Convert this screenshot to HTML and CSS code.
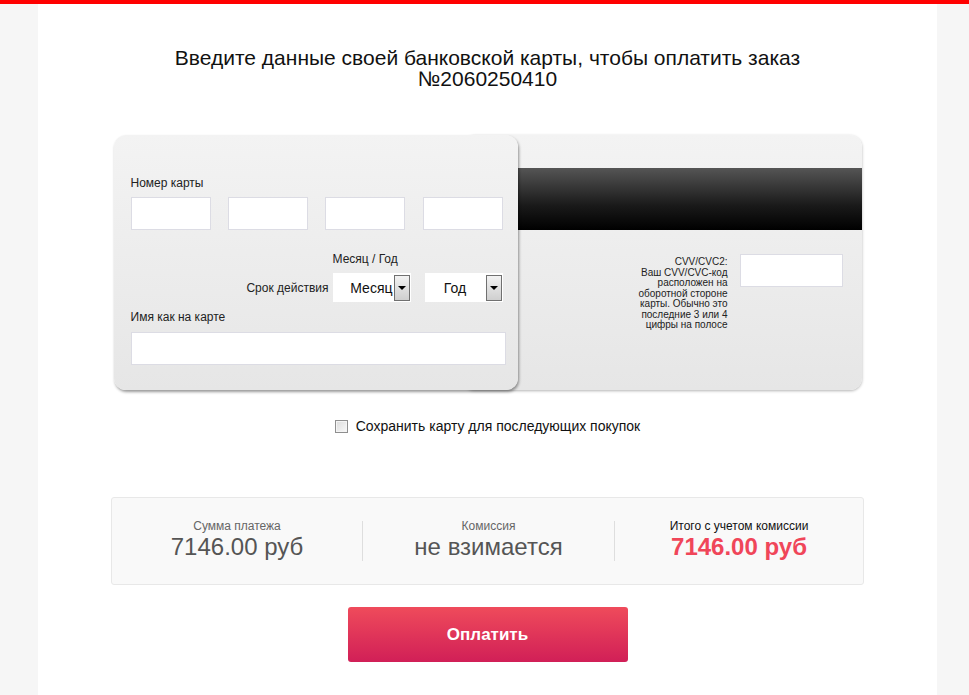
FILE: index.html
```html
<!DOCTYPE html>
<html>
<head>
    <title>Оплата заказа</title>
    <link rel="stylesheet" href="styles.css">
</head>
<body>
    <div id="topline"></div>
    <div id="page">
        <h1 class="title">Введите данные своей банковской карты, чтобы оплатить заказ<br>№2060250410</h1>

        <div class="cards">
            <div class="card card-back">
                <div class="stripe"></div>
                <div class="cvv-row">
                    <div class="cvv-hint">CVV/CVC2:<br>Ваш CVV/CVC-код<br>расположен на<br>оборотной стороне<br>карты. Обычно это<br>последние 3 или 4<br>цифры на полосе</div>
                    <input class="field cvv-input" type="text">
                </div>
            </div>
            <div class="card card-front">
                <div class="label">Номер карты</div>
                <div class="number-row">
                    <input class="field number-input" type="text">
                    <input class="field number-input" type="text">
                    <input class="field number-input" type="text">
                    <input class="field number-input" type="text">
                </div>
                <div class="expiry">
                    <div class="expiry-grid">
                        <div class="label expiry-caption">Месяц / Год</div>
                        <div class="label expiry-label">Срок действия</div>
                        <div class="select select-month">
                            <span class="select-text">Месяц</span>
                            <span class="select-arrow"></span>
                        </div>
                        <div class="select select-year">
                            <span class="select-text">Год</span>
                            <span class="select-arrow"></span>
                        </div>
                    </div>
                </div>
                <div class="label name-label">Имя как на карте</div>
                <input class="field name-input" type="text">
            </div>
        </div>

        <label class="save-card">
            <span class="checkbox"></span>
            Сохранить карту для последующих покупок
        </label>

        <div class="summary">
            <div class="summary-col">
                <div class="summary-label">Сумма платежа</div>
                <div class="summary-value">7146.00 руб</div>
            </div>
            <div class="summary-col">
                <div class="summary-label">Комиссия</div>
                <div class="summary-value">не взимается</div>
            </div>
            <div class="summary-col total">
                <div class="summary-label">Итого с учетом комиссии</div>
                <div class="summary-value">7146.00 руб</div>
            </div>
        </div>

        <button class="pay-button">Оплатить</button>
    </div>
</body>
</html>
```

FILE: styles.css
```css
html, body {
    height: 100%;
}
body {
    margin: 0;
    padding: 0;
    background: #f6f6f6;
    color: #222;
    font-family: "Liberation Sans", Arial, sans-serif;
    display: flex;
    flex-direction: column;
    overflow: hidden;
}
#topline {
    height: 4px;
    background: #ff0000;
    flex: none;
}
#page {
    flex: 1;
    width: 899px;
    margin-left: 38px;
    background: #fff;
    display: flex;
    flex-direction: column;
    align-items: center;
}
.title {
    margin: 0;
    padding-top: 43px;
    font-size: 21px;
    font-weight: normal;
    line-height: 21px;
    text-align: center;
    color: #111;
}
.cards {
    margin-top: 46px;
    width: 748px;
    display: grid;
}
.card {
    grid-area: 1 / 1;
    height: 255px;
    border-radius: 12px;
    background: linear-gradient(#f3f3f3, #e6e6e6);
    box-sizing: border-box;
}
.card-back {
    margin-left: 349px;
    width: 399px;
    padding-top: 33px;
    box-shadow: 0 1px 3px rgba(0, 0, 0, 0.3);
}
.card-front {
    width: 404px;
    padding: 41px 0 0 17px;
    box-shadow: 1px 2px 3px rgba(0, 0, 0, 0.4);
    position: relative;
}
.stripe {
    height: 62px;
    background: linear-gradient(#555, #1a1a1a 60%, #000);
}
.cvv-row {
    display: flex;
    justify-content: flex-end;
    align-items: flex-start;
    gap: 12px;
    padding: 24px 19px 0 0;
}
.cvv-hint {
    font-size: 10px;
    line-height: 10.5px;
    text-align: right;
    color: #222;
    margin-top: 3px;
}
.field {
    box-sizing: border-box;
    height: 33px;
    border: 1px solid #dcdce4;
    background: #fff;
    margin: 0;
    padding: 0 6px;
    outline: none;
}
.cvv-input {
    width: 103px;
}
.label {
    font-size: 12px;
    line-height: 14px;
    color: #222;
}
.number-row {
    display: flex;
    gap: 17px;
    margin-top: 7px;
}
.number-input {
    width: 80px;
}
.number-input:last-child {
    margin-left: 1px;
}
.expiry {
    display: flex;
    justify-content: flex-end;
    padding-right: 15px;
    margin-top: 22px;
}
.expiry-grid {
    display: grid;
    grid-template-columns: auto auto auto;
    align-items: center;
}
.expiry-caption {
    grid-column: 2 / 4;
    margin-bottom: 7px;
}
.expiry-label {
    padding-right: 4px;
}
.select {
    width: 78px;
    height: 29px;
    background: #fff;
    display: flex;
    align-items: center;
    justify-content: flex-end;
    box-sizing: border-box;
    padding-right: 1px;
}
.select-year {
    margin-left: 14px;
}
.select-text {
    flex: 1;
    text-align: center;
    font-size: 14px;
    color: #111;
}
.select-month .select-text {
    text-align: right;
    padding-right: 1px;
}
.select-arrow {
    width: 16px;
    height: 26px;
    box-sizing: border-box;
    border: 1px solid #707070;
    background: linear-gradient(#f2f2f2, #cfcfcf);
    position: relative;
}
.select-arrow::after {
    content: "";
    position: absolute;
    left: 3px;
    top: 10px;
    border-left: 4px solid transparent;
    border-right: 4px solid transparent;
    border-top: 4px solid #000;
}
.name-label {
    margin-top: 8px;
}
.name-input {
    margin-top: 8px;
    width: 375px;
}
.save-card {
    margin-top: 28px;
    display: flex;
    align-items: center;
    gap: 8px;
    font-size: 14px;
    color: #111;
    cursor: pointer;
}
.checkbox {
    width: 11px;
    height: 11px;
    border: 1px solid #8f8f8f;
    background: linear-gradient(135deg, #dcdcdc, #f8f8f8);
    box-shadow: inset 0 0 0 1px #f4f4f4;
}
.summary {
    margin-top: 63px;
    width: 753px;
    height: 88px;
    box-sizing: border-box;
    border: 1px solid #e8e8e8;
    border-radius: 3px;
    background: #f9f9f9;
    display: grid;
    grid-template-columns: 250px 252px 1fr;
    padding-top: 23px;
    align-items: start;
}
.summary-col {
    text-align: center;
    height: 40px;
}
.summary-col + .summary-col {
    border-left: 1px solid #dedede;
}
.summary-label {
    font-size: 12px;
    line-height: 12px;
    color: #666;
    margin-top: -1px;
}
.summary-value {
    font-size: 24px;
    line-height: 26px;
    color: #555;
    margin-top: 2px;
}
.total .summary-label {
    color: #111;
}
.total .summary-value {
    color: #f04659;
    font-weight: bold;
}
.pay-button {
    margin-top: 22px;
    width: 280px;
    height: 55px;
    border: none;
    border-radius: 3px;
    background: linear-gradient(#ef4b5b, #d11f57);
    color: #fff;
    font-family: "Liberation Sans", Arial, sans-serif;
    font-size: 17px;
    font-weight: bold;
    cursor: pointer;
}
```
